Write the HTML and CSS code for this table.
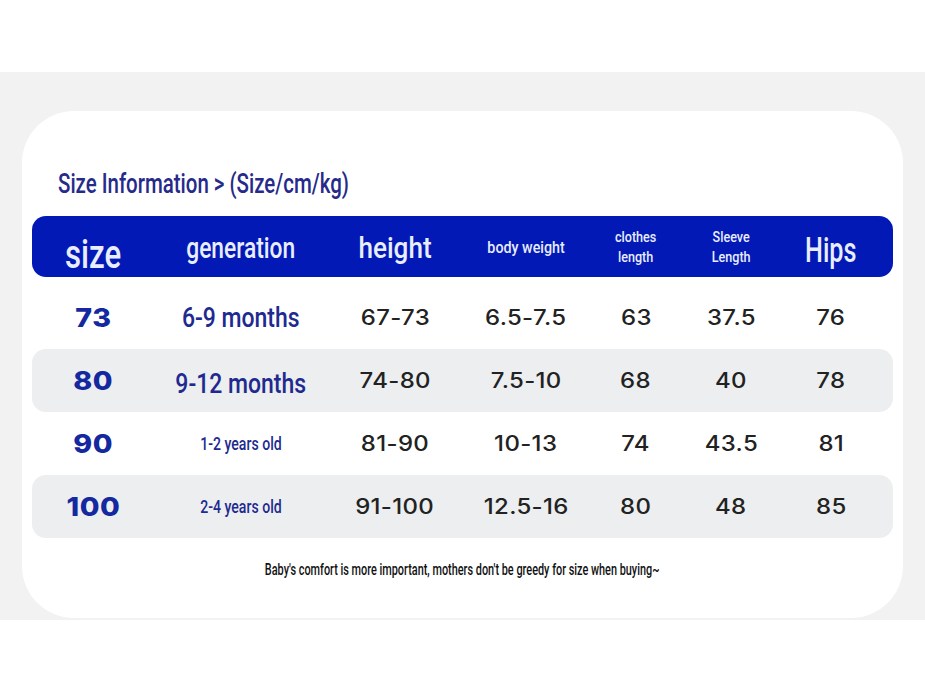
FILE: index.html
```html
<!DOCTYPE html>
<html lang="en">
<head>
  <meta charset="UTF-8" />
  <title>Size Information</title>
  <link rel="stylesheet" href="styles.css">
</head>
<body>

<div class="band">
  <div class="card">
    <h2 class="title"><span class="sq">Size Information &gt; (Size/cm/kg)</span></h2>

    <div class="chart">
      <div class="row head">
        <div class="c-size"><span class="sq">size</span></div>
        <div class="c-gen"><span class="sq">generation</span></div>
        <div class="c-height"><span class="sq">height</span></div>
        <div class="c-body"><span class="sq">body weight</span></div>
        <div class="c-small"><span class="sq">clothes<br>length</span></div>
        <div class="c-small"><span class="sq">Sleeve<br>Length</span></div>
        <div class="c-hips"><span class="sq">Hips</span></div>
      </div>

      <div class="row">
        <div class="num-size">73</div>
        <div class="gen big"><span class="sq">6-9 months</span></div>
        <div class="num">67-73</div>
        <div class="num">6.5-7.5</div>
        <div class="num">63</div>
        <div class="num">37.5</div>
        <div class="num">76</div>
      </div>

      <div class="row shade">
        <div class="num-size">80</div>
        <div class="gen big low"><span class="sq">9-12 months</span></div>
        <div class="num">74-80</div>
        <div class="num">7.5-10</div>
        <div class="num">68</div>
        <div class="num">40</div>
        <div class="num">78</div>
      </div>

      <div class="row">
        <div class="num-size">90</div>
        <div class="gen"><span class="sq">1-2 years old</span></div>
        <div class="num">81-90</div>
        <div class="num">10-13</div>
        <div class="num">74</div>
        <div class="num">43.5</div>
        <div class="num">81</div>
      </div>

      <div class="row shade">
        <div class="num-size">100</div>
        <div class="gen"><span class="sq">2-4 years old</span></div>
        <div class="num">91-100</div>
        <div class="num">12.5-16</div>
        <div class="num">80</div>
        <div class="num">48</div>
        <div class="num">85</div>
      </div>
    </div>

    <p class="note"><span class="sq">Baby's comfort is more important, mothers don't be greedy for size when buying~</span></p>
  </div>
</div>

</body>
</html>
```

FILE: styles.css
```css
body {
  margin: 0;
  padding: 72px 0 0;
  background-color: white;
  font-family: Roboto, Arial, sans-serif;
}

.band {
  background-color: #f2f2f2;
  padding: 39px 22px 2px;
}

.card {
  background-color: white;
  border-radius: 52px;
  height: 507px;
  padding: 0 10px;
  box-sizing: border-box;
}

/* squeezed text, stands in for a condensed face */
.sq {
  display: inline-block;
  white-space: nowrap;
  transform: scaleX(var(--sx, 0.8));
}

.title {
  margin: 0;
  padding: 56px 0 0 26px;
  height: 105px;
  box-sizing: border-box;
  font-size: 28px;
  font-weight: 500;
  line-height: 34px;
  color: #262a8a;
}

.title .sq {
  --sx: 0.73;
  transform-origin: left center;
}

.row {
  display: grid;
  grid-template-columns: 122px 174px 134px 128px 92px 98px 102px;
  padding-right: 11px;
  height: 63px;
  align-items: center;
  justify-items: center;
  border-radius: 14px;
}

.head {
  height: 61px;
  margin-bottom: 9px;
  background-color: #0219b5;
  color: #e8edff;
}

.shade {
  background-color: #eceeef;
}

.c-size {
  font-size: 40px;
  font-weight: 500;
  padding-top: 15px;
  --sx: 0.78;
}

.c-gen {
  font-size: 30px;
  font-weight: 500;
  --sx: 0.76;
}

.c-height {
  font-size: 30px;
  font-weight: 500;
  --sx: 0.87;
}

.c-body {
  font-size: 17px;
  font-weight: 500;
  --sx: 0.84;
}

.c-small {
  font-size: 15px;
  font-weight: 500;
  line-height: 20px;
  text-align: center;
  --sx: 0.84;
}

.c-hips {
  font-size: 35px;
  font-weight: 500;
  padding-top: 6px;
  --sx: 0.72;
}

.num-size {
  font-family: Inter, "DejaVu Sans", sans-serif;
  font-size: 26px;
  font-weight: 800;
  letter-spacing: 0.5px;
  color: #1428a0;
  transform: scaleX(1.1);
}

/* widened to get near the wide geometric digits of the original */
.num {
  font-family: Inter, "DejaVu Sans", sans-serif;
  font-size: 21px;
  font-weight: 500;
  color: #222;
  letter-spacing: 0.3px;
  transform: scaleX(1.14);
}

.gen {
  font-size: 19px;
  font-weight: 500;
  color: #1e2a90;
  --sx: 0.74;
}

.gen.big {
  font-size: 28px;
  --sx: 0.82;
}

.gen.low {
  padding-top: 6px;
}

.note {
  margin: 22px 0 0;
  text-align: center;
  font-size: 16px;
  font-weight: 500;
  color: #111;
}

.note .sq {
  --sx: 0.68;
}
```
